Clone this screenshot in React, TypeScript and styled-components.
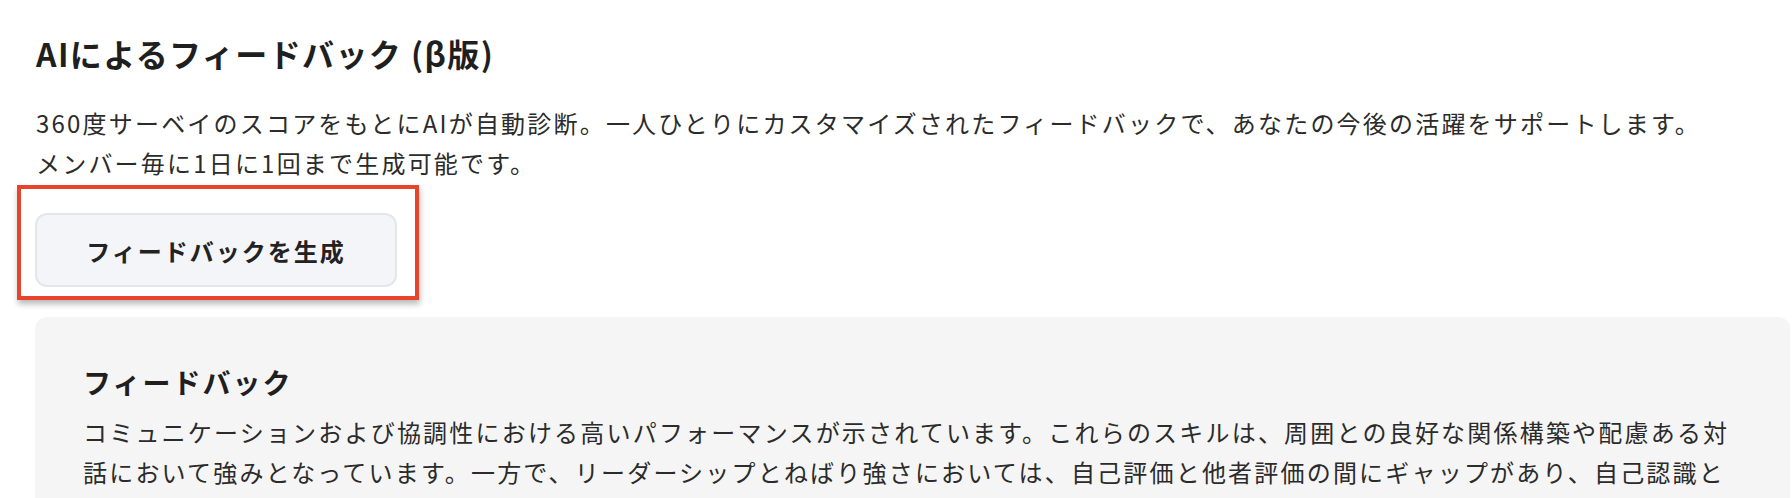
import React from "react";
import styled, { createGlobalStyle } from "styled-components";

const GlobalStyle = createGlobalStyle`
  html, body {
    margin: 0;
    padding: 0;
    background: #ffffff;
    font-family: "Noto Sans CJK JP", "Noto Sans", sans-serif;
    color: #2b2b2b;
  }
`;

const Page = styled.main`
  padding: 33px 2px 0 35px;
  display: flex;
  flex-direction: column;
  gap: 30px;
`;

const Heading = styled.h1`
  margin: 0;
  padding-left: 1px;
  font-size: 32px;
  font-weight: 700;
  line-height: 40px;
  letter-spacing: 1.4px;
  color: #1f1f1f;
`;

const Lead = styled.p`
  margin: 0;
  padding-left: 1px;
  font-size: 24px;
  line-height: 40px;
  letter-spacing: 2.2px;
  color: #2b2b2b;
`;

const ButtonArea = styled.div`
  position: relative;
  align-self: flex-start;
`;

const Highlight = styled.div`
  position: absolute;
  top: -28px;
  left: -18px;
  right: -22px;
  bottom: -13px;
  border: 4px solid #e8442b;
  box-shadow: 1px 4px 6px rgba(0, 0, 0, 0.28);
  pointer-events: none;
`;

const GenerateButton = styled.button`
  display: block;
  width: 362px;
  height: 74px;
  border: 2px solid #e4e6eb;
  border-radius: 12px;
  background: #f4f5f8;
  font-family: inherit;
  font-size: 24px;
  font-weight: 700;
  letter-spacing: 2px;
  color: #222222;
  cursor: pointer;
`;

const Panel = styled.section`
  background: #f5f5f5;
  border-radius: 12px;
  padding: 45px 48px 40px;
  display: flex;
  flex-direction: column;
  gap: 10px;
`;

const PanelTitle = styled.h2`
  margin: 0;
  font-size: 28px;
  font-weight: 700;
  line-height: 40px;
  letter-spacing: 2px;
  color: #1f1f1f;
`;

const PanelText = styled.p`
  margin: 0;
  font-size: 24px;
  line-height: 40px;
  letter-spacing: 2.2px;
  color: #2b2b2b;
`;

const App = () => {
  return (
    <>
      <GlobalStyle />
      <Page>
        <Heading>AIによるフィードバック (β版)</Heading>
        <Lead>
          360度サーベイのスコアをもとにAIが自動診断。一人ひとりにカスタマイズされたフィードバックで、あなたの今後の活躍をサポートします。
          <br />
          メンバー毎に1日に1回まで生成可能です。
        </Lead>
        <ButtonArea>
          <GenerateButton>フィードバックを生成</GenerateButton>
          <Highlight />
        </ButtonArea>
        <Panel>
          <PanelTitle>フィードバック</PanelTitle>
          <PanelText>
            コミュニケーションおよび協調性における高いパフォーマンスが示されています。これらのスキルは、周囲との良好な関係構築や配慮ある対話において強みとなっています。一方で、リーダーシップとねばり強さにおいては、自己評価と他者評価の間にギャップがあり、自己認識と他者からの見え方を照らし合わせることで、さらなる成長につながるでしょう。
          </PanelText>
        </Panel>
      </Page>
    </>
  );
};

export default App;
